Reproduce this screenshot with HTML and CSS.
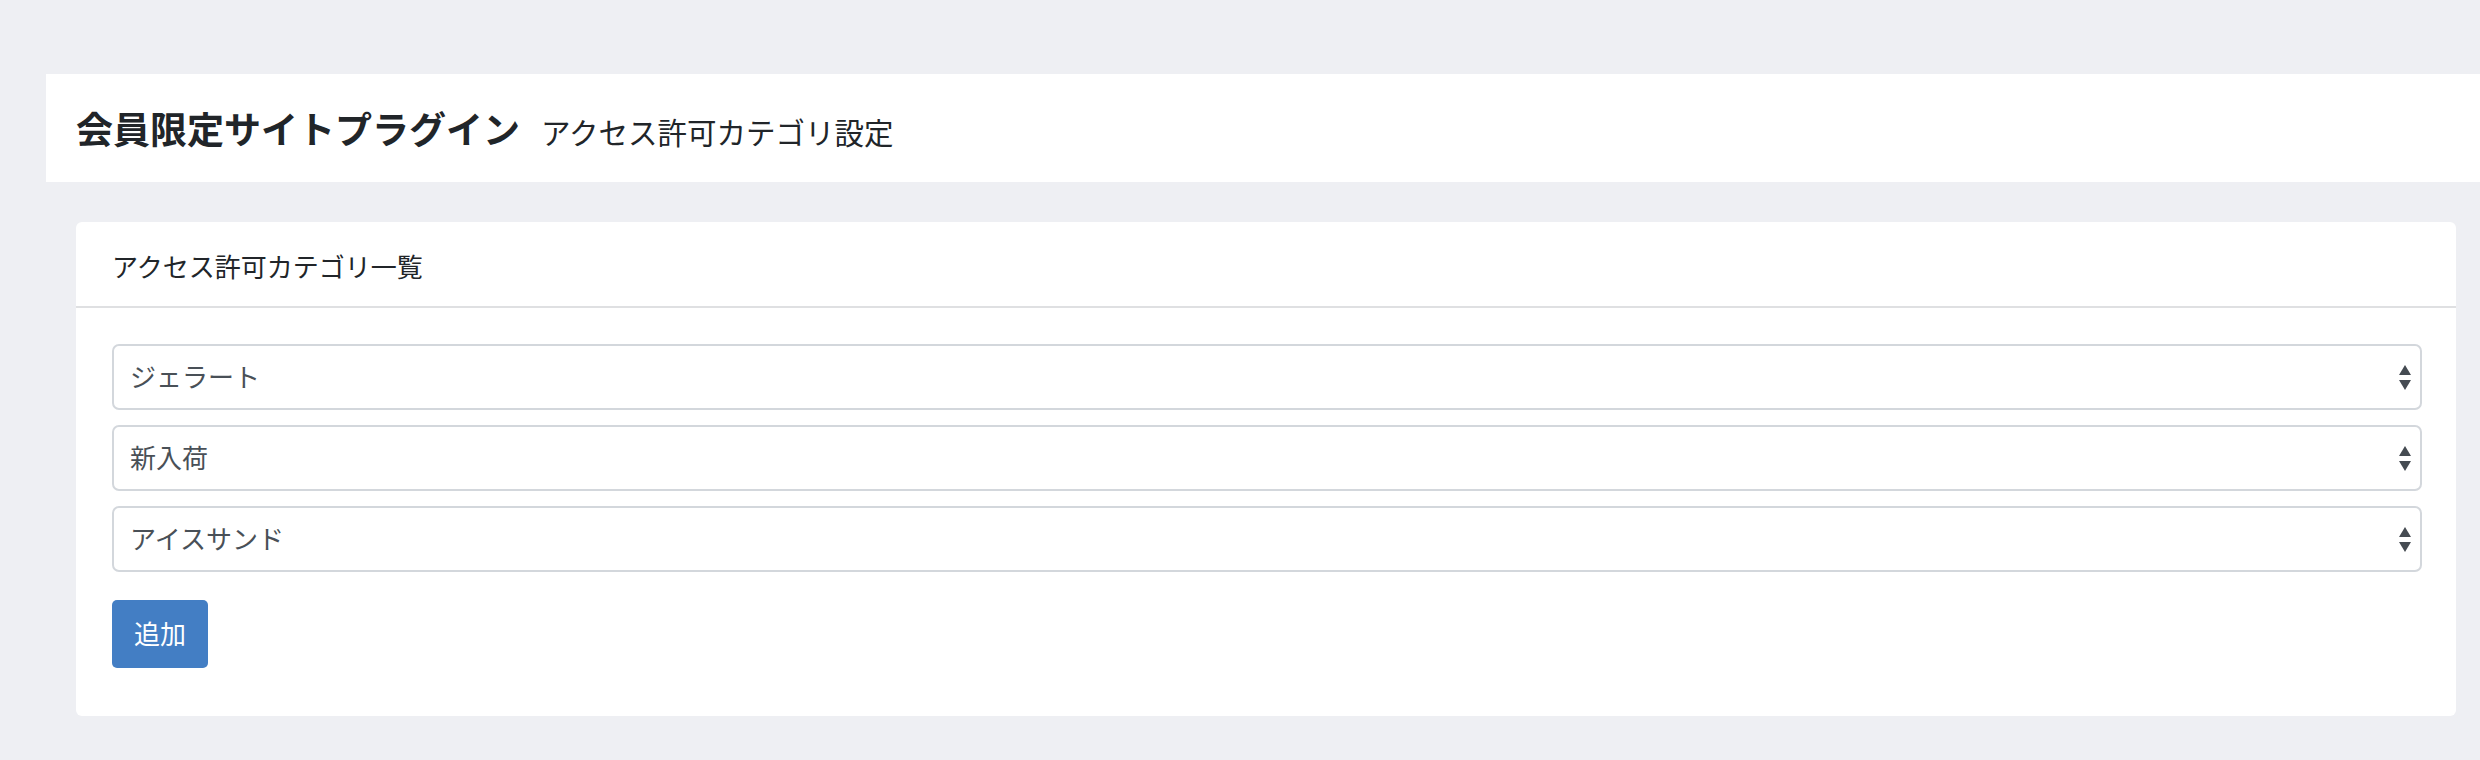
FILE: index.html
```html
<!DOCTYPE html>
<html lang="ja">
<head>
<meta charset="utf-8">
<title>会員限定サイトプラグイン</title>
<link rel="stylesheet" href="styles.css">
</head>
<body>
<div class="page">
  <header class="page-title">
    <h1 class="page-title__main">会員限定サイトプラグイン</h1>
    <span class="page-title__sub">アクセス許可カテゴリ設定</span>
  </header>
  <main class="content">
    <section class="card">
      <div class="card__header">アクセス許可カテゴリ一覧</div>
      <div class="card__body">
        <select class="form-select"><option>ジェラート</option></select>
        <select class="form-select"><option>新入荷</option></select>
        <select class="form-select"><option>アイスサンド</option></select>
        <button class="btn-add" type="button">追加</button>
      </div>
    </section>
  </main>
</div>
</body>
</html>
```

FILE: styles.css
```css
html, body {
  margin: 0;
  padding: 0;
}
body {
  background: #eeeff3;
  font-family: "Noto Sans CJK JP", "Noto Sans", sans-serif;
  color: #23272b;
}
.page {
  padding: 74px 0 0 46px;
}
.page-title {
  height: 108px;
  background: #ffffff;
  display: flex;
  align-items: baseline;
  padding-left: 30px;
  box-sizing: border-box;
  padding-top: 30px;
}
.page-title__main {
  margin: 0;
  font-size: 37px;
  font-weight: 700;
  line-height: 48px;
  color: #212529;
}
.page-title__sub {
  margin-left: 21px;
  font-size: 29.5px;
  line-height: 48px;
  color: #212529;
}
.content {
  padding: 40px 24px 0 30px;
}
.card {
  background: #ffffff;
  border-radius: 6px;
}
.card__header {
  height: 86px;
  box-sizing: border-box;
  padding: 27px 0 0 36px;
  font-size: 26px;
  line-height: 34px;
  color: #212529;
  border-bottom: 2px solid #dfe0e2;
}
.card__body {
  display: flex;
  flex-direction: column;
  align-items: flex-start;
  padding: 36px 34px 48px 36px;
}
.form-select {
  appearance: none;
  -webkit-appearance: none;
  width: 100%;
  height: 66px;
  margin: 0 0 15px 0;
  padding: 0 40px 4px 16px;
  border: 2px solid #d3d7dc;
  border-radius: 7px;
  background-color: #ffffff;
  background-image: url("data:image/svg+xml,%3Csvg xmlns='http://www.w3.org/2000/svg' width='12' height='25' viewBox='0 0 12 25'%3E%3Cpolygon points='6,0 12,10 0,10' fill='%23454b52'/%3E%3Cpolygon points='0,15 12,15 6,25' fill='%23454b52'/%3E%3C/svg%3E");
  background-repeat: no-repeat;
  background-position: right 9px center;
  background-size: 12px 25px;
  font-family: "Noto Sans CJK JP", "Noto Sans", sans-serif;
  font-size: 26px;
  color: #495057;
  box-sizing: border-box;
}
.form-select:nth-of-type(3) {
  margin-bottom: 28px;
}
.btn-add {
  width: 96px;
  height: 68px;
  padding: 0 0 4px 0;
  border: none;
  border-radius: 5px;
  background: #437ec4;
  color: #ffffff;
  font-family: "Noto Sans CJK JP", "Noto Sans", sans-serif;
  font-size: 26px;
  cursor: pointer;
}
```
